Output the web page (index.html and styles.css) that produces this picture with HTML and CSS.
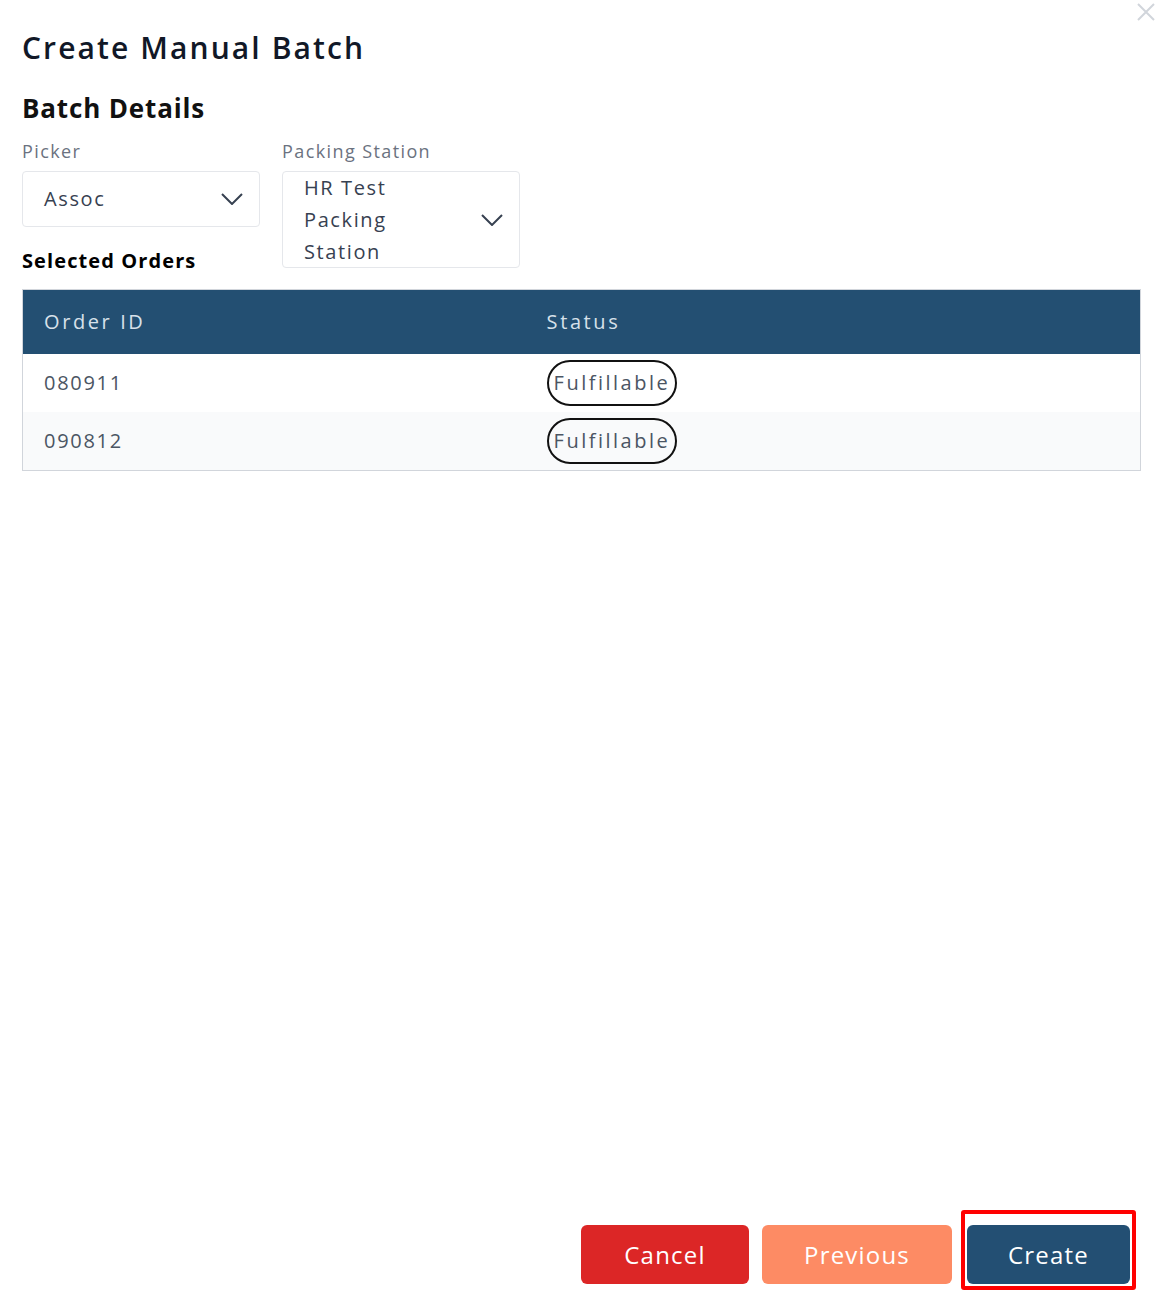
FILE: index.html
```html
<!DOCTYPE html>
<html lang="en">
<head>
    <meta charset="UTF-8">
    <meta name="viewport" content="width=device-width, initial-scale=1.0">
    <title>Create Manual Batch</title>
    <link rel="stylesheet" href="styles.css">
</head>
<body>
    <div class="modal">
        <button class="close-btn" aria-label="Close">
            <svg width="20" height="20" viewBox="0 0 20 20"><path d="M2 2 L18 18 M18 2 L2 18" stroke="currentColor" stroke-width="2" fill="none"/></svg>
        </button>

        <h1 class="modal-title">Create Manual Batch</h1>

        <h2 class="section-title">Batch Details</h2>
        <div class="fields">
            <div class="field">
                <label class="field-label">Picker</label>
                <div class="select">
                    <span class="select-value">Assoc</span>
                    <svg class="chevron" width="22" height="12" viewBox="0 0 22 12"><path d="M1 1 L11 11 L21 1" stroke="currentColor" stroke-width="2" fill="none"/></svg>
                </div>
            </div>
            <div class="field">
                <label class="field-label">Packing Station</label>
                <div class="select tall">
                    <span class="select-value">HR Test Packing Station</span>
                    <svg class="chevron" width="22" height="12" viewBox="0 0 22 12"><path d="M1 1 L11 11 L21 1" stroke="currentColor" stroke-width="2" fill="none"/></svg>
                </div>
            </div>
        </div>

        <h3 class="orders-title">Selected Orders</h3>
        <table class="orders-table">
            <thead>
                <tr><th class="col-id">Order ID</th><th>Status</th></tr>
            </thead>
            <tbody>
                <tr><td>080911</td><td><span class="badge">Fulfillable</span></td></tr>
                <tr><td>090812</td><td><span class="badge">Fulfillable</span></td></tr>
            </tbody>
        </table>

        <div class="modal-footer">
            <button class="btn btn-cancel">Cancel</button>
            <button class="btn btn-previous">Previous</button>
            <span class="highlight">
                <button class="btn btn-create">Create</button>
            </span>
        </div>
    </div>
</body>
</html>
```

FILE: styles.css
```css
body, html {
    margin: 0; padding: 0; background: #fff;
    font-family: 'Open Sans', 'Noto Sans', sans-serif;
}
.modal {
    position: relative; box-sizing: border-box; min-height: 1302px;
    padding: 28px 15px 18px 22px;
    display: flex; flex-direction: column;
}
.close-btn {
    position: absolute; top: 2px; right: 0; padding: 0;
    background: none; border: none; color: #d1d5db; cursor: pointer;
}
.close-btn svg { display: block; }
.modal-title {
    margin: 0; font-size: 30px; line-height: 40px; font-weight: 600; color: #111827;
    letter-spacing: 2.1px;
}
.section-title {
    margin: 24px 0 0; font-size: 26px; line-height: 32px; font-weight: 700; color: #111;
    letter-spacing: 0.85px;
}
.fields {
    display: flex; gap: 22px; height: 109px; margin-top: 16px;
}
.field {
    display: flex; flex-direction: column; width: 238px;
}
.field-label {
    font-size: 18px; line-height: 22px; color: #6b7280; margin-bottom: 9px;
    letter-spacing: 1.4px;
}
.select {
    box-sizing: border-box; height: 56px; flex-shrink: 0;
    display: flex; align-items: center; justify-content: space-between;
    padding: 0 16px 0 21px;
    border: 1px solid #e5e7eb; border-radius: 4px; background: #fff;
    color: #374151; font-size: 20px; letter-spacing: 1.6px;
}
.select.tall {
    height: 97px; position: relative; z-index: 1;
}
.select-value {
    line-height: 32px; max-width: 130px;
}
.chevron { color: #374151; flex-shrink: 0; }
.orders-title {
    margin: 0 0 16px; font-size: 20px; line-height: 24px; font-weight: 700; color: #000;
    letter-spacing: 1.1px;
}
.orders-table {
    width: 100%; border-collapse: collapse; border: 1px solid #d1d5db;
    font-size: 20px; letter-spacing: 1.7px;
}
.orders-table th {
    background: #234f72; color: #d7e1ea; font-weight: 500; text-align: left;
    height: 64px; padding: 0 21px; box-sizing: border-box; letter-spacing: 2.6px;
}
.orders-table th.col-id { width: 45%; }
.orders-table td {
    height: 58px; padding: 0 21px; color: #4b5563;
}
.orders-table tbody tr:nth-child(2) { background: #f9fafb; }
.badge {
    display: inline-block; border: 2px solid #111; border-radius: 24px;
    padding: 6px 5px; line-height: 30px; color: #4b5563; letter-spacing: 2.5px;
}
.modal-footer {
    margin-top: auto; margin-right: 11px;
    display: flex; justify-content: flex-end; gap: 13px;
}
.btn {
    height: 59px; border: none; border-radius: 6px; color: #fff;
    font-family: inherit; font-size: 24px; font-weight: 500; cursor: pointer;
    letter-spacing: 1.2px;
}
.btn-cancel { background: #dc2626; width: 168px; }
.btn-previous { background: #fd8b64; width: 190px; }
.btn-create { background: #234f73; width: 163px; display: block; }
.highlight {
    position: relative; margin-left: 2px;
}
.highlight::after {
    content: ''; position: absolute; top: -15px; bottom: -6px; left: -6px; right: -6px;
    border: 4px solid #ff0000; border-radius: 3px; pointer-events: none;
}
```
